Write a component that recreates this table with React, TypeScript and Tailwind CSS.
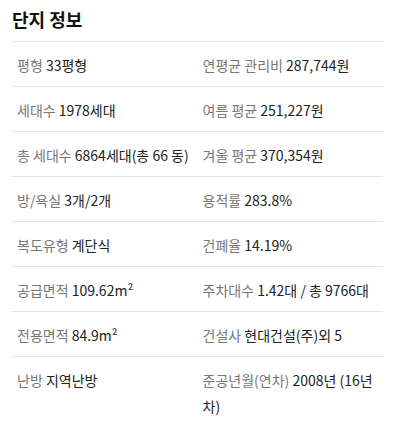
const rows: [string, string, string, string][] = [
  ["평형", "33평형", "연평균 관리비", "287,744원"],
  ["세대수", "1978세대", "여름 평균", "251,227원"],
  ["총 세대수", "6864세대(총 66 동)", "겨울 평균", "370,354원"],
  ["방/욕실", "3개/2개", "용적률", "283.8%"],
  ["복도유형", "계단식", "건폐율", "14.19%"],
  ["공급면적", "109.62m²", "주차대수", "1.42대 / 총 9766대"],
  ["전용면적", "84.9m²", "건설사", "현대건설(주)외 5"],
  ["난방", "지역난방", "준공년월(연차)", "2008년 (16년차)"],
];

function Cell({ label, value }: { label: string; value: string }) {
  return (
    <div className="px-[5px] pt-[10px] pb-[8px] leading-[26px]">
      <span className="text-[#777]">{label}</span>{" "}
      <span className="text-[#222]">{value}</span>
    </div>
  );
}

export default function App() {
  return (
    <div
      className="w-full bg-white px-3 text-[14px]"
      style={{ fontFamily: '"Noto Sans CJK KR", "Noto Sans", sans-serif' }}
    >
      <h2 className="pt-[6px] pb-[9px] text-[18px] leading-[26px] font-bold text-[#111]">
        단지 정보
      </h2>
      <div className="border-t border-[#e5e5e5]">
        {rows.map((r, i) => (
          <div
            key={i}
            className={
              i < rows.length - 1
                ? "grid grid-cols-2 border-b border-[#e5e5e5]"
                : "grid grid-cols-2"
            }
          >
            <Cell label={r[0]} value={r[1]} />
            <Cell label={r[2]} value={r[3]} />
          </div>
        ))}
      </div>
    </div>
  );
}
